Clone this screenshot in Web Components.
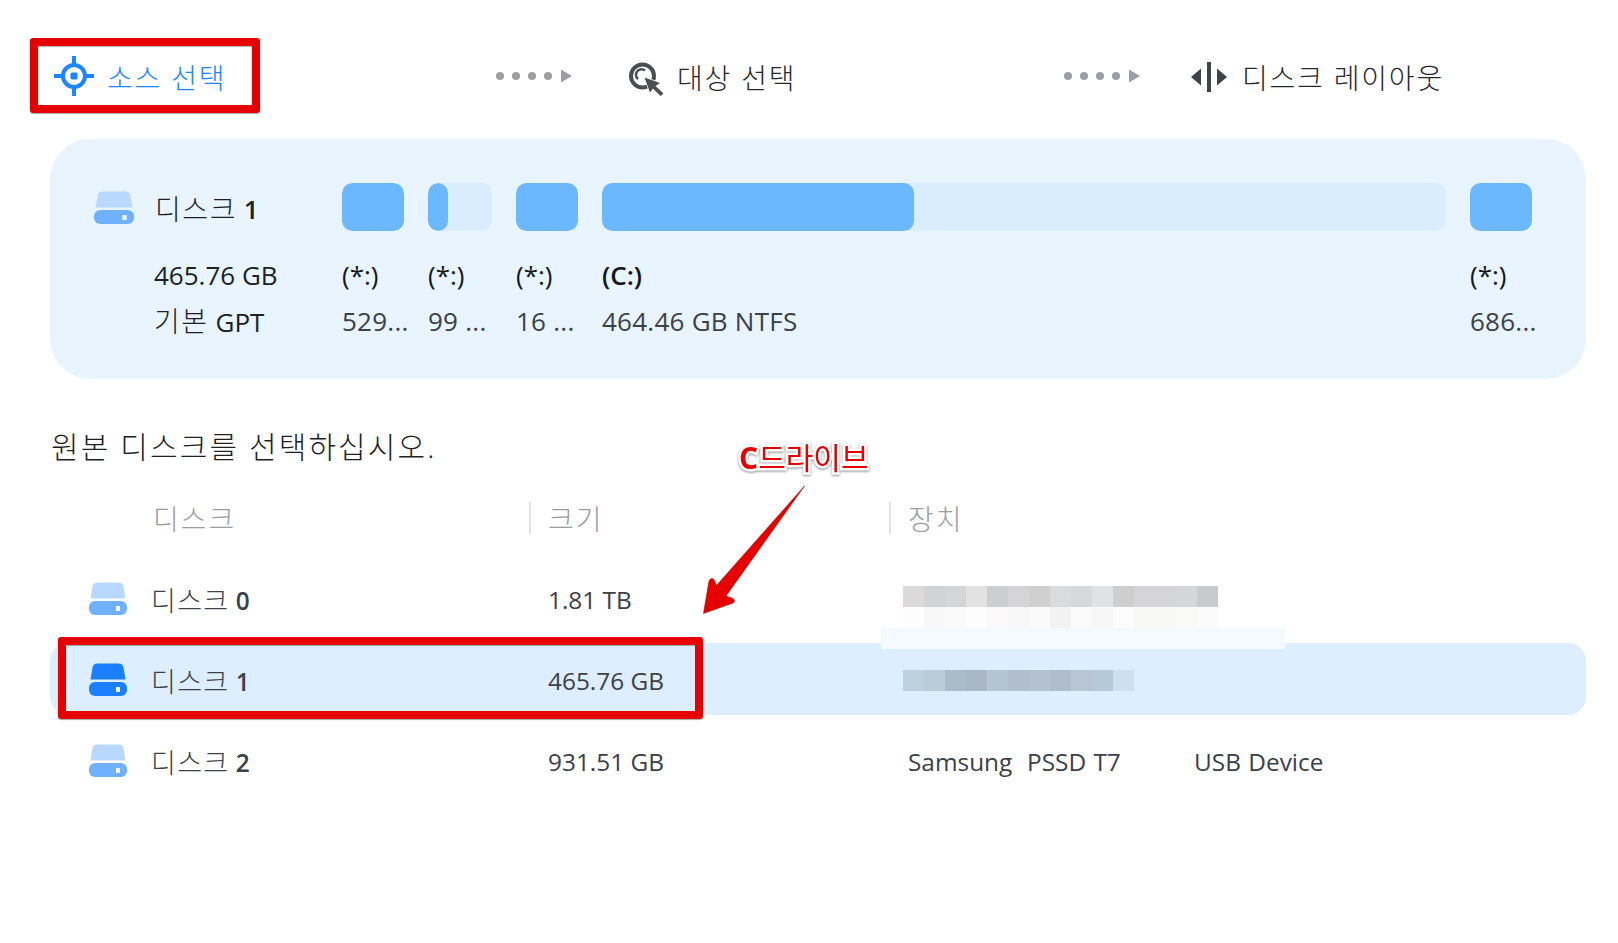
<!DOCTYPE html>
<html lang="ko">
<head>
<meta charset="utf-8">
<title>소스 선택</title>
<style>
  html, body { margin: 0; background: #fff; }
  body {
    width: 1618px;
    height: 943px;
    overflow: hidden;
    position: relative;
    font-family: "Open Sans", "Noto Sans CJK KR", sans-serif;
    color: #33373e;
  }
</style>
</head>
<body>
  <wizard-steps></wizard-steps>
  <disk-summary></disk-summary>
  <disk-table></disk-table>
  <review-marks></review-marks>

<script>
const FONT = `"Open Sans", "Noto Sans CJK KR", sans-serif`;

class DiskIcon extends HTMLElement {
  connectedCallback() {
    const top = this.getAttribute('top') || '#b9d8ff';
    const base = this.getAttribute('base') || '#6fb1ff';
    const width = this.getAttribute('width') || 38;
    this.attachShadow({ mode: 'open' }).innerHTML = `
      <style>:host { display: block; width: ${width}px; height: 33px; } svg { display: block; }</style>
      <svg width="${width}" height="33" viewBox="0 0 38 33" preserveAspectRatio="none">
        <path d="M1.5 16.500 L3.500 4.500 Q4.200 .5 8.500 .5 H29.500 Q33.800 .5 34.500 4.500 L36.500 16.500 Z" fill="${top}"/>
        <rect x="0" y="19" width="38" height="14" rx="6" fill="${base}"/>
        <rect x="27" y="24" width="4" height="5" fill="#fff" opacity=".9"/>
      </svg>`;
  }
}
customElements.define('disk-icon', DiskIcon);

class StepArrow extends HTMLElement {
  connectedCallback() {
    this.attachShadow({ mode: 'open' }).innerHTML = `
      <style>:host { display: block; } svg { display: block; }</style>
      <svg width="77" height="14" viewBox="0 0 77 14" fill="#9b9ea4">
        <circle cx="4" cy="7" r="4"/><circle cx="20" cy="7" r="4"/>
        <circle cx="36" cy="7" r="4"/><circle cx="52" cy="7" r="4"/>
        <path d="M65 .5 L76 7 L65 13.500 Z"/>
      </svg>`;
  }
}
customElements.define('step-arrow', StepArrow);

const STEP_ICONS = {
  source: `<svg width="40" height="40" viewBox="0 0 40 40" fill="none" stroke="#1a86ff">
      <circle cx="20" cy="20" r="11" stroke-width="4"/>
      <rect x="16.500" y="16.500" width="7" height="7" rx="1.500" fill="#1a86ff" stroke="none"/>
      <path d="M20 0V8M20 32V40M0 20H8M32 20H40" stroke-width="4"/>
    </svg>`,
  target: `<svg width="36" height="42" viewBox="0 0 36 42" fill="none" stroke="#4a4d52">
      <circle cx="14.500" cy="21" r="11.500" stroke-width="4"/>
      <path d="M10 24 A5.500 5.500 0 0 1 17 15.500" stroke-width="2.500"/>
      <path d="M16.500 22.500 L32 28 L27.500 31 L35.500 38.500 L32.500 41 L25 33.500 L22 37.500 Z" fill="#4a4d52" stroke="#fff" stroke-width="1.500" paint-order="stroke"/>
    </svg>`,
  layout: `<svg width="36" height="34" viewBox="0 0 36 34" fill="#3f4248">
      <rect x="16" y="3" width="4" height="30"/>
      <path d="M10 9.500 V26.500 L0 18 Z M26 9.500 V26.500 L36 18 Z"/>
    </svg>`
};

class WizardStep extends HTMLElement {
  connectedCallback() {
    const active = this.hasAttribute('active');
    this.attachShadow({ mode: 'open' }).innerHTML = `
      <style>
        :host { display: flex; align-items: center; gap: ${this.getAttribute('gap') || 14}px; }
        svg { display: block; }
        span {
          position: relative;
          top: 1px;
          font-size: 28px;
          letter-spacing: 1.800px;
          white-space: nowrap;
          font-weight: 300;
          color: ${active ? '#1a86ff' : '#26282c'};
        }
      </style>
      ${STEP_ICONS[this.getAttribute('icon')]}
      <span><slot></slot></span>`;
  }
}
customElements.define('wizard-step', WizardStep);

class WizardSteps extends HTMLElement {
  connectedCallback() {
    this.attachShadow({ mode: 'open' }).innerHTML = `
      <style>
        :host {
          display: grid;
          grid-template-columns: 442px 132px 436px 127px auto;
          align-items: center;
          height: 40px;
          padding: 55px 0 0 54px;
        }
      </style>
      <wizard-step icon="source" active gap="13">소스 선택</wizard-step>
      <step-arrow></step-arrow>
      <wizard-step icon="target" gap="13">대상 선택</wizard-step>
      <step-arrow></step-arrow>
      <wizard-step icon="layout" gap="15">디스크 레이아웃</wizard-step>`;
  }
}
customElements.define('wizard-steps', WizardSteps);

class PartitionItem extends HTMLElement {
  connectedCallback() {
    const fill = this.getAttribute('fill');
    this.attachShadow({ mode: 'open' }).innerHTML = `
      <style>
        :host { display: block; width: ${this.getAttribute('width')}px; }
        .bar { height: 48px; border-radius: 10px; background: #d9edff; overflow: hidden; }
        .used { height: 100%; width: ${fill}px; border-radius: 10px; background: #6cb8ff; }
        .name, .info { font-size: 26px; white-space: nowrap; }
        .name { color: #14161a; margin-top: 21px; line-height: 46px; font-weight: ${this.hasAttribute('strong') ? 600 : 400}; }
        .info { color: #3c4047; line-height: 46px; letter-spacing: .25px; }
      </style>
      <div class="bar"><div class="used"></div></div>
      <div class="name">${this.getAttribute('name')}</div>
      <div class="info">${this.getAttribute('info')}</div>`;
  }
}
customElements.define('partition-item', PartitionItem);

class DiskSummary extends HTMLElement {
  connectedCallback() {
    this.attachShadow({ mode: 'open' }).innerHTML = `
      <style>
        :host {
          display: grid;
          grid-template-columns: 248px 1fr;
          box-sizing: border-box;
          width: 1536px;
          height: 240px;
          margin: 44px 0 0 50px;
          padding: 44px 0 0 44px;
          background: #e8f4ff;
          border-radius: 40px;
        }
        .head { display: flex; align-items: center; gap: 21px; height: 48px; font-size: 26px; color: #1d1f23; }
        .head > span { position: relative; top: 1px; }
        .head b { font-weight: 600; position: relative; top: -1px; }
        .ko { font-size: 28px; letter-spacing: 1.600px; font-weight: 300; }
        .line { font-size: 26px; line-height: 46px; padding-left: 60px; white-space: nowrap; color: #1d1f23; }
        .line:nth-child(2) { margin-top: 21px; }
        .parts { display: flex; gap: 24px; }
      </style>
      <div>
        <div class="head"><disk-icon width="40"></disk-icon><span><span class="ko">디스크</span> <b>1</b></span></div>
        <div class="line">465.76 GB</div>
        <div class="line"><span class="ko">기본</span> GPT</div>
      </div>
      <div class="parts">
        <partition-item width="62" fill="62" name="(*:)" info="529..."></partition-item>
        <partition-item width="64" fill="20" name="(*:)" info="99 ..."></partition-item>
        <partition-item width="62" fill="62" name="(*:)" info="16 ..."></partition-item>
        <partition-item width="844" fill="312" name="(C:)" info="464.46 GB NTFS" strong></partition-item>
        <partition-item width="62" fill="62" name="(*:)" info="686..."></partition-item>
      </div>`;
  }
}
customElements.define('disk-summary', DiskSummary);

class DiskRow extends HTMLElement {
  connectedCallback() {
    const selected = this.hasAttribute('selected');
    const icon = selected ? 'top="#1a80ff" base="#1a80ff"' : '';
    this.attachShadow({ mode: 'open' }).innerHTML = `
      <style>
        :host {
          display: grid;
          grid-template-columns: 62px 397px 360px 1fr;
          align-items: center;
          height: 72px;
          padding-left: 39px;
          border-radius: 18px;
          font-size: 24.400px;
          color: #3c4047;
          background: ${selected ? '#dceeff' : 'transparent'};
        }
        .ko { font-size: 27px; letter-spacing: 1.300px; font-weight: 300; }
        b { font-weight: 600; position: relative; top: -1px; }
        .cell { position: relative; top: 1px; }
        .device { display: flex; white-space: pre; word-spacing: 1px; }
      </style>
      <disk-icon ${icon}></disk-icon>
      <div class="cell"><span class="ko">디스크</span> <b>${this.getAttribute('num')}</b></div>
      <div class="cell">${this.getAttribute('size')}</div>
      <div class="cell device"><slot></slot></div>`;
  }
}
customElements.define('disk-row', DiskRow);

class DiskTable extends HTMLElement {
  connectedCallback() {
    this.attachShadow({ mode: 'open' }).innerHTML = `
      <style>
        :host { display: block; width: 1536px; margin-left: 50px; }
        h2 {
          margin: 48px 0 0 1px;
          font-size: 30px;
          line-height: 40px;
          font-weight: 300;
          letter-spacing: 2.100px;
          color: #1d1f23;
        }
        .columns {
          display: grid;
          grid-template-columns: 479px 360px 1fr;
          align-items: center;
          height: 40px;
          margin: 31px 0 24px;
          font-size: 28px;
          font-weight: 300;
          letter-spacing: 2px;
          color: #9a9da3;
        }
        .columns div { height: 32px; line-height: 34px; }
        .columns div:first-child { padding-left: 103px; }
        .columns div + div { border-left: 2px solid #e2e2e2; padding-left: 17px; }
        .rows { display: grid; gap: 9px; }
      </style>
      <h2>원본 디스크를 선택하십시오.</h2>
      <div class="columns"><div>디스크</div><div>크기</div><div>장치</div></div>
      <div class="rows">
        <disk-row num="0" size="1.81 TB"></disk-row>
        <disk-row num="1" size="465.76 GB" selected></disk-row>
        <disk-row num="2" size="931.51 GB"><span style="width:286px;display:block">Samsung  PSSD T7</span><span>USB Device</span></disk-row>
      </div>`;
  }
}
customElements.define('disk-table', DiskTable);

class PixelStrip extends HTMLElement {
  connectedCallback() {
    const colors = this.getAttribute('colors').split(' ');
    this.attachShadow({ mode: 'open' }).innerHTML = `
      <style>
        :host { display: flex; position: absolute; left: ${this.getAttribute('x')}px; top: ${this.getAttribute('y')}px; }
        i { display: block; width: 21px; height: 21px; }
      </style>
      ${colors.map(c => `<i style="background:#${c}"></i>`).join('')}`;
  }
}
customElements.define('pixel-strip', PixelStrip);

class ReviewMarks extends HTMLElement {
  connectedCallback() {
    this.attachShadow({ mode: 'open' }).innerHTML = `
      <style>
        :host { position: absolute; inset: 0; display: block; pointer-events: none; }
        .box {
          position: absolute;
          box-sizing: border-box;
          border: 8px solid #e60000;
          border-radius: 3px;
          box-shadow: 0 1px 1px rgba(0,0,0,.35), inset 0 1px 1px rgba(0,0,0,.3);
        }
        .wash { position: absolute; left: 881px; top: 628px; width: 404px; height: 21px; background: #f5faff; }
        .label {
          position: absolute;
          left: 739px;
          top: 436px;
          font: 700 30px/44px ${FONT};
          color: #e60000;
          white-space: nowrap;
          paint-order: stroke fill;
          -webkit-text-stroke: 5px #fff;
          filter: drop-shadow(0 1px 1px rgba(0,0,0,.45));
        }
        .label span { font-weight: 400; }
        svg { position: absolute; left: 0; top: 0; }
      </style>
      <div class="box" style="left:30px;top:38px;width:230px;height:75px"></div>
      <div class="box" style="left:58px;top:637px;width:645px;height:82px"></div>
      <pixel-strip x="903" y="586" colors="dbd9d9 d2d3d5 d4d5d6 e2e2e2 cdced0 d5d5d7 d0d0ce dadbdd d8d9db e1e2e3 cecece d5d5d7 d5d5d7 d5d6d8 c9cacc"></pixel-strip>
      <pixel-strip x="903" y="607" colors="fdfdfd f8f8f8 fafafa fdfdfd faf8f8 f8f8f9 fafafa f2f2f2 fbfbfb f7f7f8 fcfcfc f8f8f7 f8f8f7 f9f9f8 fbfbfc"></pixel-strip>
      <div class="wash"></div>
      <pixel-strip x="903" y="670" colors="bdd0de bccbd8 acbbca aab7c5 b5c4d1 b0bfcb b4c2cf afbdcb b8c6d3 b6c9d8 cde0ef"></pixel-strip>
      <div class="label">C<span>드라이브</span></div>
      <svg width="1618" height="943">
        <path d="M804.500 486 L726 596 L733 598.500 Q736 601 733 603 L703.500 613.500 L709 581 Q711 577 714 579.500 L716.500 585.500 Z"
              fill="#e60000" stroke="#b00000" stroke-width=".6"/>
      </svg>`;
  }
}
customElements.define('review-marks', ReviewMarks);
</script>
</body>
</html>
